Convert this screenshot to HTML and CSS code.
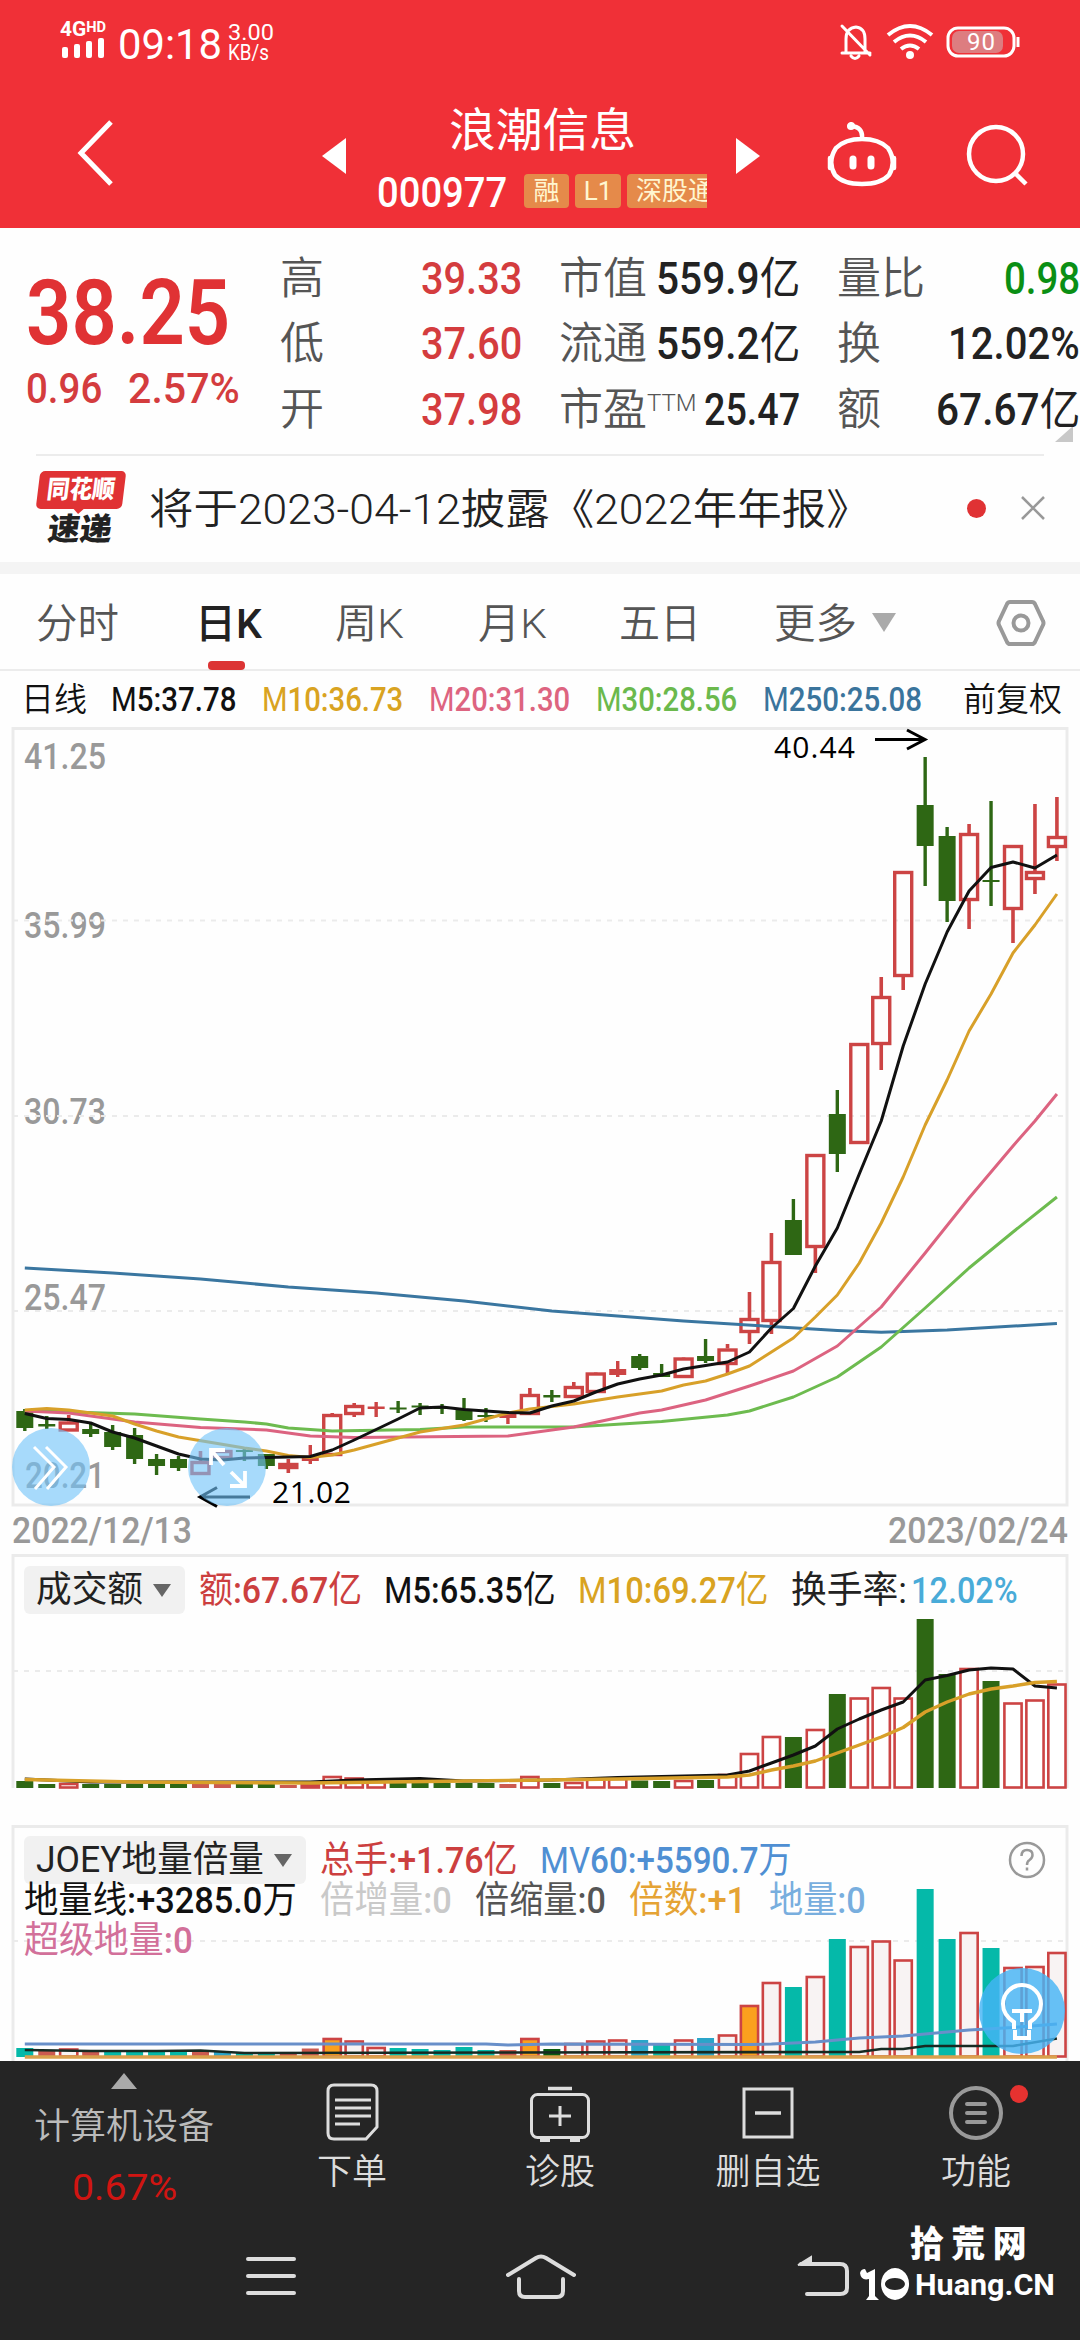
FILE: index.html
```html
<!DOCTYPE html>
<html lang="zh-CN">
<head>
<meta charset="utf-8">
<title>浪潮信息 000977</title>
<link rel="stylesheet" href="styles.css">
</head>
<body>
<header class="top">
  <div class="status">
    <div class="net"><b data-w="46">4G<sup>HD</sup></b>
      <svg width="46" height="22" viewBox="0 0 46 22" fill="#fff"><rect x="2" y="10" width="6" height="11" rx="2"/><rect x="14" y="7" width="6" height="14" rx="2"/><rect x="26" y="4" width="6" height="17" rx="2"/><rect x="38" y="1" width="6" height="20" rx="2"/></svg>
    </div>
    <span class="clock"><span data-w="104">09:18</span></span>
    <div class="speed"><span data-w="46">3.00</span><span data-w="41">KB/s</span></div>
    <svg class="sys" width="184" height="38" viewBox="0 0 184 38" fill="none" stroke="#fff" stroke-width="3">
      <path d="M3 30h28M7 30V16q0-11 10-12q9 1 9 12v14M12 33q4 5 8 0M3 3l28 29" stroke-linecap="round"/>
      <g stroke-width="4"><path d="M49 12q22-18 44 0M55 19q16-13 32 0M62 26q9-7 18 0"/></g><circle cx="71" cy="32" r="4" fill="#fff" stroke="none"/>
      <rect x="109" y="5" width="66" height="28" rx="10"/><rect x="113" y="8" width="51" height="22" rx="7" fill="#c9c9c9" fill-opacity=".5" stroke="none"/><path d="M179 14v10"/>
      <text x="128" y="27" textLength="28" fill="#fff" stroke="none" font-family="Roboto" font-size="24">90</text>
    </svg>
  </div>
  <div class="bar">
    <svg class="back" width="36" height="66" viewBox="0 0 36 66" fill="none" stroke="#fff" stroke-width="5"><path d="M34 2L4 33L34 64"/></svg>
    <svg class="prev" width="24" height="36" viewBox="0 0 24 36"><path d="M24 0v36L0 18z" fill="#fff"/></svg>
    <div class="title">
      <h1><span data-w="187">浪潮信息</span></h1>
      <div class="code"><span data-w="130">000977</span><i class="t1">融</i><i class="t2">L1</i><i class="t3">深股通</i></div>
    </div>
    <svg class="next" width="24" height="36" viewBox="0 0 24 36"><path d="M0 0v36L24 18z" fill="#fff"/></svg>
    <svg class="robot" width="70" height="66" viewBox="0 0 70 66" fill="none" stroke="#fff" stroke-width="4.5" stroke-linecap="round"><path d="M35 17Q18 17 9 26Q0 40 8 53Q16 62 35 62Q54 62 62 53Q70 40 61 26Q52 17 35 17zM35 16Q36 5 24 4"/><circle cx="24" cy="4" r="1.8"/><path d="M3 36v10M67 36v10"/><path d="M26 37v7M44 37v7" stroke-width="7"/></svg>
    <svg class="search" width="62" height="62" viewBox="0 0 62 62" fill="none" stroke="#fff" stroke-width="4.5"><circle cx="30" cy="30" r="27"/><path d="M49 49l11 11"/></svg>
  </div>
</header>

<section class="quote">
  <div class="price">
    <strong><span data-w="204">38.25</span></strong>
    <p><span data-w="76">0.96</span><span data-w="112">2.57%</span></p>
  </div>
  <dl class="stats">
    <dt>高</dt><dd class="r"><span data-w="101">39.33</span></dd><dt>市值</dt><dd><span data-w="144">559.9亿</span></dd><dt>量比</dt><dd class="g"><span data-w="76">0.98</span></dd>
    <dt>低</dt><dd class="r"><span data-w="101">37.60</span></dd><dt>流通</dt><dd><span data-w="144">559.2亿</span></dd><dt>换</dt><dd><span data-w="132">12.02%</span></dd>
    <dt>开</dt><dd class="r"><span data-w="101">37.98</span></dd><dt>市盈<sup>TTM</sup></dt><dd><span data-w="96">25.47</span></dd><dt>额</dt><dd><span data-w="144">67.67亿</span></dd>
  </dl>
  <svg class="more" width="18" height="16" viewBox="0 0 18 16"><path d="M18 0v16H0z" fill="#c8c8c8"/></svg>
</section>

<section class="news">
  <div class="logo"><b><span data-w="68">同花顺</span></b><em><span data-w="64">速递</span></em></div>
  <p><span data-w="722">将于2023-04-12披露《2022年年报》</span></p>
  <span class="dot"></span>
  <svg width="26" height="26" viewBox="0 0 26 26" stroke="#999" stroke-width="2.5"><path d="M2 2l22 22M24 2L2 24"/></svg>
</section>

<nav class="tabs">
  <span><b data-w="83">分时</b></span><span class="on"><b data-w="67">日K</b></span><span><b data-w="69">周K</b></span><span><b data-w="69">月K</b></span><span><b data-w="82">五日</b></span>
  <span><b data-w="83">更多</b><svg width="24" height="19" viewBox="0 0 24 19"><path d="M0 0h24L12 19z" fill="#aaa"/></svg></span>
  <svg class="hex" width="50" height="48" viewBox="0 0 50 48" fill="none" stroke="#999" stroke-width="4" stroke-linejoin="round"><path d="M14 3h22q2 0 3 2l8 17q1 2 0 4l-8 17q-1 2-3 2H14q-2 0-3-2L3 26q-1-2 0-4l8-17q1-2 3-2z"/><circle cx="25" cy="24" r="7.5"/></svg>
</nav>

<div class="ma">
  <span class="cn">日线</span><span><b data-w="125">M5:37.78</b></span><span class="o"><b data-w="141">M10:36.73</b></span><span class="p"><b data-w="141">M20:31.30</b></span><span class="gr"><b data-w="141">M30:28.56</b></span><span class="bl"><b data-w="159">M250:25.08</b></span><span class="cn">前复权</span>
</div>

<svg id="kline" class="kline" width="1080" height="827" viewBox="0 727 1080 827">
  <g class="axis">
    <text x="24" y="769" textLength="82" lengthAdjust="spacingAndGlyphs">41.25</text>
    <text x="24" y="938" textLength="82" lengthAdjust="spacingAndGlyphs">35.99</text>
    <text x="24" y="1124" textLength="82" lengthAdjust="spacingAndGlyphs">30.73</text>
    <text x="24" y="1310" textLength="82" lengthAdjust="spacingAndGlyphs">25.47</text>
    <text x="25" y="1488" textLength="80" lengthAdjust="spacingAndGlyphs">20.21</text>
    <text x="12" y="1543" textLength="180" lengthAdjust="spacingAndGlyphs">2022/12/13</text>
    <text x="888" y="1543" textLength="180" lengthAdjust="spacingAndGlyphs">2023/02/24</text>
  </g>
  <g class="frame"><path d="M13 728.5H1067V1505H13z"/><path class="dash" d="M13 920.5H1067M13 1116H1067M13 1311H1067"/></g>
  <g id="candles"></g>
  <g class="mark">
    <text x="774" y="758" textLength="81">40.44</text><path d="M875 739.5h48M907 730l18 9.500l-18 9.500"/>
    <text x="272" y="1502.500" textLength="79">21.02</text><path d="M250 1497h-48M217 1487.500l-17 9.500l17 9.500"/>
  </g>
  <g class="float">
    <circle cx="51" cy="1467" r="39"/><path d="M34 1447l20 20l-19 22M46 1447l20 20l-19 22" stroke-width="3"/>
    <circle cx="227" cy="1467" r="39"/><path d="M211 1465v-15h14M211 1450l13 15M230 1486h15v-15M245 1486l-14-14" stroke-width="3.800"/>
  </g>
</svg>

<section class="panel vol">
  <svg id="volume" width="1080" height="271" viewBox="0 1554 1080 271">
    <g class="frame"><path d="M13 1788V1555.500H1067V1788"/><path class="dash" d="M13 1671H1067"/></g>
  </svg>
  <div class="legend l1">
    <span class="pick"><b data-w="107">成交额</b><i></i></span><span class="r"><b data-w="163">额:67.67亿</b></span><span><b data-w="172">M5:65.35亿</b></span><span class="o"><b data-w="191">M10:69.27亿</b></span><span class="dk"><b data-w="116">换手率:</b></span><span class="sk"><b data-w="107">12.02%</b></span>
  </div>
</section>

<section class="panel joey">
  <svg id="joey" width="1080" height="236" viewBox="0 1825 1080 236">
    <g class="frame"><path d="M13 2061V1826.500H1067V2061"/><path class="dash" d="M13 1941H1067"/></g>
  </svg>
  <div class="rows">
    <div class="legend l2"><span class="pick"><b data-w="228">JOEY地量倍量</b><i></i></span><span class="r"><b data-w="198">总手:+1.76亿</b></span><span class="b2"><b data-w="252">MV60:+5590.7万</b></span>
      <svg class="help" width="38" height="38" viewBox="0 0 38 38" fill="none" stroke="#999" stroke-width="2.500"><circle cx="19" cy="19" r="17"/><path d="M13.500 15q0-6 5.500-6t5.500 5q0 3-3 5q-2.500 1.500-2.500 5M19 26.500v3"/></svg></div>
    <div class="legend l3"><span><b data-w="273">地量线:+3285.0万</b></span><span class="lt"><b data-w="132">倍增量:0</b></span><span class="gy"><b data-w="131">倍缩量:0</b></span><span class="or"><b data-w="117">倍数:+1</b></span><span class="b3"><b data-w="97">地量:0</b></span></div>
    <div class="legend l3"><span class="pk"><b data-w="169">超级地量:0</b></span></div>
  </div>
</section>

<footer class="foot">
  <div class="menu">
    <div class="idx"><svg width="26" height="16" viewBox="0 0 26 16"><path d="M13 0l13 16H0z" fill="#aaa"/></svg><span>计算机设备</span><b><span data-w="105">0.67%</span></b></div>
    <div><svg width="60" height="60" viewBox="0 0 60 60" fill="none" stroke="#ddd" stroke-width="3"><path d="M12 3H49Q55 3 55 9V45L44 57H12Q6 57 6 51V9Q6 3 12 3z"/><path d="M13 18H49M13 26H49M13 34H49M13 42H38"/></svg>下单</div>
    <div><svg width="60" height="60" viewBox="0 0 60 60" fill="none" stroke="#ddd" stroke-width="3"><path d="M18 6.500H42" stroke-width="3.500"/><rect x="1.500" y="12.500" width="57" height="43" rx="6"/><path d="M19 34H41M30 24V44M10 58.500h10M40 58.500h10"/></svg>诊股</div>
    <div><svg width="60" height="60" viewBox="0 0 60 60" fill="none" stroke="#ddd" stroke-width="3"><rect x="6" y="7" width="48" height="48"/><path d="M17 31H43" stroke-width="3.500"/></svg>删自选</div>
    <div class="fn"><svg width="60" height="60" viewBox="0 0 60 60" fill="none" stroke="#999" stroke-width="4"><circle cx="30" cy="31" r="25"/><path d="M21 22H39M21 31H39M21 40H39" stroke-linecap="round"/></svg><i></i>功能</div>
  </div>
  <div class="keys">
    <svg width="50" height="42" viewBox="0 0 50 42" stroke="#ddd" stroke-width="4" stroke-linecap="round"><path d="M2 3H48M2 20H48M2 37H48"/></svg>
    <svg width="70" height="46" viewBox="0 0 70 46" fill="none" stroke="#ddd" stroke-width="4" stroke-linecap="round"><path d="M2 21L30 4Q35 1 40 4L68 21M13 25V37Q13 43 19 43H51Q57 43 57 37V25"/></svg>
    <svg width="54" height="46" viewBox="0 0 54 46" fill="none" stroke="#ddd" stroke-width="4" stroke-linecap="round"><path d="M4 10H43Q50 10 50 17V34Q50 40 43 40H10"/><path d="M1 11L14 3V9z" fill="#ddd" stroke-width="2"/></svg>
  </div>
  <div class="mark-site"><b><span data-w="124">拾荒网</span></b>
    <p><svg width="52" height="34" viewBox="0 0 52 34" fill="#fff"><path d="M0 5Q1 1 5 1l2 4l8-4v27l4 4H6l3-4V11Q1 13 0 5z"/><path fill-rule="evenodd" d="M35 0a14 16 0 1 0 .1 0zM35 10a10 6 0 1 1-.1 0z"/></svg><span data-w="140">Huang.CN</span></p>
  </div>
</footer>
<div class="bulb"><svg width="88" height="88" viewBox="0 0 88 88" fill="none" stroke="#fff" stroke-width="4"><circle cx="44" cy="44" r="43" fill="#46b4f5" fill-opacity=".82" stroke="none"/><path d="M36 62V55Q25 48 25 37A19 19 0 0 1 63 37Q63 48 52 55V62M34 44H54M44 44V55M37 63V71H51V63"/></svg></div>
<script src="chart.js"></script>
</body>
</html>
```
FILE: styles.css
```css
* { box-sizing: border-box; margin: 0; padding: 0; }
body { width: 1080px; height: 2340px; overflow: hidden; position: relative; background: #fefefe; color: #222; font-family: Roboto, "Noto Sans CJK SC", sans-serif; }
svg { display: block; flex: none; }
i, em { font-style: normal; }
.fit { display: inline-block; white-space: nowrap; vertical-align: baseline; }
.fit > span { display: inline-block; transform-origin: 0 50%; white-space: nowrap; }
.thin { font-weight: 400; }

.top { height: 228px; background: #f03037; color: #fff; }
.status { height: 84px; padding: 22px 82px 0 60px; display: flex; align-items: flex-start; }
.net { width: 58px; }
.net b { font-size: 20px; line-height: 14px; font-weight: 700; height: 14px; display: block; }
.net sup { font-size: 14px; line-height: 0; vertical-align: 4px; }
.net svg { margin-top: 1px; }
.clock { width: 110px; font-size: 43px; line-height: 44px; }
.speed { display: flex; flex-direction: column; font-size: 22px; line-height: 20px; padding-top: 1px; }
.sys { margin-left: auto; margin-right: -25px; margin-top: 1px; }

.bar { height: 144px; display: flex; align-items: flex-start; }
.back { margin: 36px 0 0 77px; }
.prev { margin: 54px 0 0 209px; }
.title { width: 330px; margin: 14px 0 0 31px; display: flex; flex-direction: column; align-items: center; }
.title h1 { font-size: 46px; font-weight: 400; line-height: 64px; }
.code { width: 330px; height: 36px; margin-top: 12px; display: flex; overflow: hidden; font-size: 42px; line-height: 37px; font-weight: 500; }
.code i { height: 34px; line-height: 34px; background: #e58a4a; border-radius: 4px; font-size: 26px; font-weight: 400; text-align: center; flex: none; color: #fff6d0; }
.t1 { width: 45px; margin-left: 17px; }
.t2 { width: 46px; margin-left: 6px; }
.t3 { width: 96px; margin-left: 6px; }
.next { margin: 54px 0 0 29px; }
.robot { margin: 38px 0 0 67px; }
.search { margin: 40px 0 0 69px; }

.quote { height: 226px; display: flex; padding-top: 18px; }
.price { width: 280px; padding: 31px 0 0 26px; color: #e03234; }
.price strong { font-size: 90px; font-weight: 600; line-height: 74px; height: 74px; display: block; }
.price p { display: flex; gap: 26px; font-size: 43px; font-weight: 500; line-height: 50px; margin-top: 12px; color: #d43c3e; }
.stats { display: grid; grid-template-columns: 100px 142px 37px 90px 151px 37px 90px 153px; grid-template-rows: repeat(3, 65.500px); align-items: center; width: 800px; }
.stats dt { font-size: 44px; font-weight: 350; color: #555; white-space: nowrap; line-height: 64px; }
.stats dt:nth-of-type(3n+1) { grid-column: 1; }
.stats dt:nth-of-type(3n+2) { grid-column: 4; }
.stats dt:nth-of-type(3n) { grid-column: 7; }
.stats dd { font-size: 44px; font-weight: 500; text-align: right; line-height: 64px; }
.stats dt sup { font-size: 24px; font-weight: 300; line-height: 0; vertical-align: 14px; }
.stats .r { color: #d43c3e; }
.stats .g { color: #0a8f14; }
.more { margin: 180px 0 0 -25px; }

.news { height: 108px; display: flex; align-items: center; padding: 0 36px 0 36px; background: linear-gradient(#ececec, #ececec) 36px 0 / 1008px 2px no-repeat; }
.logo { width: 113px; height: 80px; margin-top: 6px; }
.logo b { display: block; width: 86px; height: 38px; background: #e03234; border-radius: 5px; transform: skewX(-7deg); margin-left: 2px; color: #fff; font-size: 25px; line-height: 38px; font-weight: 900; text-align: center; }
.logo b::after { content: ""; display: block; margin: -3px auto 0; width: 0; border: 8px solid transparent; border-top-color: #e03234; border-bottom: 0; }
.logo em { display: block; font-size: 31px; line-height: 32px; font-weight: 900; transform: skewX(-7deg); margin: 5px 0 0 12px; }
.news p { font-size: 42px; font-weight: 350; width: 808px; line-height: 60px; padding-top: 4px; color: #222; }
.dot { width: 19px; height: 19px; border-radius: 50%; background: #e03234; margin-left: 10px; flex: none; }
.news > svg { margin-left: 34px; margin-right: -2px; }

.tabs { height: 109px; border-top: 12px solid #f4f4f4; border-bottom: 2px solid #ececec; display: grid; grid-template-columns: 159px 140px 143px 141px 155px 222px 60px; padding-left: 36px; font-size: 41px; font-weight: 350; line-height: 60px; color: #555; padding-top: 20px; }
.tabs b { font-weight: inherit; }
.tabs span { white-space: nowrap; }
.tabs > span { position: relative; }
.tabs .on { font-weight: 500; color: #222; }
.tabs .on::after { content: ""; position: absolute; left: 13px; top: 67px; width: 37px; height: 9px; border-radius: 4px; background: #dc3434; }
.tabs span svg { display: inline-block; margin-left: 15px; vertical-align: 6px; }
.hex { margin-top: 5px; }

.ma { height: 56px; display: grid; grid-template-columns: 90px 151px 167px 167px 167px 200px 110px; padding-left: 21px; font-size: 33px; font-weight: 500; line-height: 58px; color: #111; white-space: nowrap; }
.ma b, .legend b { font-weight: inherit; }
.ma .cn { font-size: 33px; font-weight: 350; }
.o { color: #d9a321; }
.p { color: #dd6480; }
.gr { color: #6bb94c; }
.bl { color: #3a749c; }

.axis { font-size: 37px; font-weight: 500; fill: #999; }
.frame path { fill: none; stroke: #ebebeb; stroke-width: 3; }
.frame .dash { stroke-width: 2; stroke-dasharray: 5 6; }
.mark text { font: 400 30px "Open Sans", sans-serif; fill: #000; }
.mark path { fill: none; stroke: #000; stroke-width: 3; }
.float circle { fill: #71c3f8; fill-opacity: .62; }
.float path { stroke: #fff; fill: none; }

.panel { display: grid; }
.panel > * { grid-area: 1 / 1; }
.vol { height: 271px; }
.joey { height: 236px; }
.legend { display: flex; height: 48px; line-height: 50px; font-size: 37px; font-weight: 500; white-space: nowrap; padding-left: 24px; color: #111; }
.vol .legend { margin-top: 12px; }
.legend > span + span { margin-left: 22px; }
.pick { background: #f1f1f1; border-radius: 6px; display: flex; align-items: center; padding-left: 12px; font-weight: 400; font-size: 36px; color: #222; }
.pick i { border: 9px solid transparent; border-top: 13px solid #666; border-bottom: 0; margin: 0 14px 0 10px; }
.legend > .pick + span { margin-left: 14px; }
.dk { font-weight: 400; color: #222; }
.legend > .dk + .sk { margin-left: 4px; }
.legend .r { color: #cc3f3f; }
.sk { color: #49abd8; }
.rows { padding-top: 11px; }
.legend.l3 { height: 40px; line-height: 40px; margin-top: -3px; }
.legend.l3 + .l3 { margin-top: 0; }
.l3 > span + span { margin-left: 23px; }
.b2 { color: #4f8fd3; }
.lt { color: #c9c9c9; }
.gy { color: #555; }
.or { color: #e5a334; }
.b3 { color: #78aede; }
.pk { color: #d2709a; }
.help { margin: 5px 0 0 216px; }
.bulb { position: absolute; left: 978px; top: 1967px; }

.foot { height: 279px; background: #252525; color: #ccc; position: relative; }
.menu { display: grid; grid-template-columns: 248px repeat(4, 208px); height: 160px; font-size: 35px; font-weight: 350; line-height: 52px; color: #ddd; }
.menu > div { display: flex; flex-direction: column; align-items: center; padding-top: 21px; position: relative; }
.menu > div > svg { margin-bottom: 5px; }
.menu .idx { padding-top: 12px; font-size: 36px; color: #bbb; }
.menu .idx > svg { margin-bottom: 12px; }
.idx b { color: #d01512; font-weight: 400; font-size: 37px; margin-top: 9px; }
.fn i { position: absolute; left: 138px; top: 24px; width: 18px; height: 18px; border-radius: 50%; background: #e63230; }
.keys { display: flex; align-items: center; height: 72px; margin-top: 20px; padding-left: 246px; }
.keys svg + svg { margin-left: 210px; }
.keys svg + svg + svg { margin-left: 221px; }
.mark-site { position: absolute; left: 860px; top: 156px; color: #fff; }
.mark-site b { font: 900 36px/48px "Noto Sans CJK SC", sans-serif; display: block; margin-left: 50px; letter-spacing: 8px; }
.mark-site p { display: flex; gap: 3px; align-items: center; font-size: 29px; font-weight: 700; line-height: 36px; margin-top: 2px; }
```
FILE: chart.js
```js
// Chinese characters and the leading "M" of the average labels are set lighter than the digits.
function lightenRuns() {
  document.querySelectorAll('.stats dd [data-w], .ma [data-w], .legend [data-w]').forEach(function (el) {
    el.innerHTML = el.textContent.replace(/[\u4e00-\u9fff]+|^MV?/g, function (m) {
      return '<span class="thin">' + m + '</span>';
    });
  });
}

// Fit each label to its designed width.
function fitLabels() {
  document.querySelectorAll('[data-w]').forEach(function (el) {
    var w = +el.dataset.w;
    var inner = document.createElement('span');
    while (el.firstChild) inner.appendChild(el.firstChild);
    el.appendChild(inner);
    el.classList.add('fit');
    var natural = inner.offsetWidth;
    el.style.width = w + 'px';
    inner.style.transform = 'scaleX(' + w / natural + ')';
    el.style.textAlign = 'left';
  });
}

var NS = 'http://www.w3.org/2000/svg';
var RED = '#cc4444', GREEN = '#2e6714';
function X(i) { return 24.8 + 21.96 * i; }
function add(parent, tag, attrs) {
  var n = document.createElementNS(NS, tag);
  for (var k in attrs) n.setAttribute(k, attrs[k]);
  parent.appendChild(n);
}
function line(parent, pts, color, w) {
  add(parent, 'polyline', { points: pts.map(function (p) { return X(p[0]) + ',' + p[1]; }).join(' '), fill: 'none', stroke: color, 'stroke-width': w || 3, 'stroke-linejoin': 'round' });
}

// [kind, body top, body bottom, wick top, wick bottom]; kinds: g green, r hollow red, f solid red
var candles = [
  ['g',1411,1428,1409,1431],['g',1424,1426.5,1416,1429],['r',1421.5,1431.5,1415,1431],['g',1429,1434,1423,1437],
  ['g',1432,1447,1425,1450],['g',1435,1459,1428,1464],['g',1459,1466,1454,1475],['g',1459,1468,1456,1471],
  ['r',1461,1475,1451,1474],['r',1450,1459,1449,1458],['g',1450,1452,1449,1461],['g',1454,1466,1454,1469],
  ['r',1463,1469,1459,1473],['f',1457,1461,1445,1464],['r',1414,1456,1413,1455],['r',1405,1415,1403,1417],
  ['f',1406.5,1409,1402,1417],['g',1407.5,1409.5,1401,1413],['g',1405.5,1407.5,1403,1415],['g',1407,1409,1404,1414],
  ['g',1410,1420,1398,1421],['g',1415,1417,1408,1422],['f',1414,1418,1414,1424],['r',1394,1415,1388,1414],
  ['g',1395,1397.5,1390,1402],['r',1386,1398,1382,1397],['r',1372.5,1393,1373,1392],['f',1369,1375,1361,1377],
  ['g',1356,1368,1354,1370],['g',1373,1377,1364,1377],['r',1357.5,1378,1358,1377],['g',1356,1361,1339,1363],
  ['r',1348.5,1365,1344,1374],['r',1318,1333,1292,1344],['r',1261,1322,1233,1334],['g',1220,1255,1199,1255],
  ['r',1154,1248,1155,1273],['g',1114,1154,1090,1172],['r',1043,1144,1044,1143],['r',996,1045,977,1070],
  ['r',871,977,872,990],['g',805,846,757,886],['g',836,901,827,922],['r',833,901,824,929],
  ['g',880,882,801,906],['r',845,910,846,943],['r',871,880,804,894],['r',836,848,797,861]
];
var g = document.getElementById('candles');
candles.forEach(function (c, i) {
  var x = X(i), col = c[0] === 'g' ? GREEN : RED;
  if (c[0] === 'r') {
    add(g, 'path', { d: 'M' + x + ' ' + c[3] + 'V' + c[1] + 'M' + x + ' ' + c[2] + 'V' + Math.max(c[2], c[4]), stroke: col, 'stroke-width': 3.6 });
    add(g, 'rect', { x: x - 8.5, y: c[1] + 1.5, width: 17, height: c[2] - c[1] - 3, fill: 'none', stroke: col, 'stroke-width': 3.4 });
  } else {
    add(g, 'path', { d: 'M' + x + ' ' + c[3] + 'V' + c[4], stroke: col, 'stroke-width': 3.4 });
    add(g, 'rect', { x: x - 8.5, y: c[1], width: 17, height: c[2] - c[1], fill: col });
  }
});
line(g, [[0,1268],[4,1273],[8,1279],[12,1287],[16,1293],[20,1301],[24,1311],[30,1321],[34,1326.5],[37,1330.5],[39,1332.2],[42,1330],[47,1323.6]], '#3a76a0');
line(g, [[0,1410.5],[5,1414],[8,1419],[10,1422],[11,1424],[12,1428],[14,1431],[18,1429.5],[20,1427],[25,1427],[29,1421.5],[32,1415],[33,1411],[35,1397],[37,1377],[39,1347],[41,1308],[43,1268],[45,1232],[47,1197]], '#6dbb4f');
line(g, [[0,1411],[2,1413],[5,1422],[8,1427.5],[11,1430],[13,1436],[15,1437.5],[22,1436],[23,1433],[25,1427],[28,1413],[29,1410],[31,1400],[33,1386],[35,1371],[37,1346],[39,1307],[41,1253],[43,1198],[45,1146],[46,1121],[47,1094]], '#dc6380');
line(g, [[0,1410],[1,1408.5],[2,1410],[4,1416],[5,1424],[6,1431],[7,1437],[10,1448],[11,1451],[12,1455.5],[13,1457.5],[14,1455],[15,1450],[17,1438],[18,1432],[20,1425],[22,1413],[23,1409],[25,1404],[27,1397],[29,1391],[30,1385],[31,1381],[32,1374],[33,1366],[34,1352],[35,1338],[36,1317],[37,1295],[38,1263],[39,1223],[40,1177],[41,1125],[42,1080],[43,1031],[44,994],[45,953],[46,925],[47,894]], '#d8a029');
line(g, [[0,1413.5],[1,1418.5],[2,1419.5],[3,1423],[4,1432],[5,1438],[6,1446],[7,1454],[8,1459],[9,1460],[10,1458],[12,1457],[13,1456.5],[14,1450],[15,1440],[17,1419],[18,1408],[19,1407],[20,1409.5],[21,1411],[22,1412.5],[23,1413],[24,1406],[25,1401],[26,1392],[27,1384],[28,1379],[29,1375],[30,1369],[31,1365.5],[32,1362],[33,1352],[34,1328],[35,1308.5],[36,1266],[37,1228],[38,1174],[39,1121],[40,1046],[41,984],[42,932],[43,891],[44,867.5],[45,862],[46,868],[47,855]], '#111');

function bars(parent, data, base) {
  data.forEach(function (b, i) {
    var x = X(i), hollow = b[0] === 'r', o = b[0] === 'o';
    var fill = { g: GREEN, f: '#cc5a50', t: '#05b9a9', o: '#fba01e', d: '#0b5c10', c: '#2aa5c9', r: base > 2000 ? '#f8f3f3' : '#fff' }[b[0]];
    add(parent, 'rect', hollow || o
      ? { x: x - 8.6, y: b[1] + 1, width: 17.2, height: base - b[1] - 1.5, fill: fill, stroke: '#cc4444', 'stroke-width': 2.6 }
      : { x: x - 8.5, y: b[1], width: 17, height: base - b[1], fill: fill });
  });
}
var vol = document.getElementById('volume');
bars(vol, [['g',1781],['g',1784],['r',1783],['g',1784],['g',1784],['g',1784],['g',1784],['g',1784],['f',1784],['f',1784],['g',1784],['g',1784],['f',1785],['r',1784],['r',1776],['r',1777.5],['r',1781],['g',1783],['g',1783],['g',1783],['g',1783],['g',1783],['f',1784],['r',1776],['g',1783],['r',1782],['r',1778],['r',1778],['g',1780.5],['g',1781],['r',1780],['g',1780],['r',1774],['r',1753],['r',1736],['g',1737],['r',1729],['g',1694],['r',1697.5],['r',1687],['r',1697.5],['g',1619],['g',1674],['r',1668],['g',1681],['r',1702.5],['r',1699.5],['r',1683.5]], 1788);
line(vol, [[0,1779],[1,1780],[3,1782],[13,1782],[15,1780],[18,1778.5],[20,1781],[24,1780],[27,1777.5],[32,1775],[33,1771],[34,1763],[35,1755],[36,1746],[37,1729],[38,1719],[39,1710],[40,1702],[41,1680],[42,1675.5],[43,1670],[44,1668],[45,1669],[46,1686],[47,1688]], '#111');
line(vol, [[0,1779.5],[5,1782],[13,1783],[20,1781],[27,1779],[32,1777],[33,1775],[34,1770],[35,1766],[36,1761],[37,1753],[38,1745],[39,1737],[40,1727.5],[41,1712],[42,1702],[43,1694],[44,1689],[45,1686],[46,1682.5],[47,1681.5]], '#d8a029', 3.4);

var joey = document.getElementById('joey');
bars(joey, [['t',2048],['f',2051],['r',2048.5],['f',2052],['t',2051],['t',2051],['t',2052],['t',2052],['f',2051],['c',2052],['t',2053],['t',2053],['f',2052],['f',2048.5],['o',2038],['r',2040.5],['r',2047],['t',2048],['t',2049],['t',2050],['t',2047],['t',2050],['f',2050],['o',2038],['d',2049],['r',2043],['r',2040.5],['r',2039.5],['c',2040],['t',2045],['r',2039.5],['c',2038],['r',2034.5],['o',2005],['r',1982],['t',1987],['r',1976],['t',1939],['r',1946],['r',1940.5],['r',1959.5],['t',1889],['t',1939],['r',1932],['t',1948],['r',1967],['r',1966],['r',1952]], 2057);
line(joey, [[0,2044],[21,2044],[22,2045],[24,2044],[33,2044.5],[34,2044],[36,2042],[38,2038],[40,2036],[43,2030],[45,2027.5],[47,2024]], '#688fc9', 3);
line(joey, [[0,2050],[3,2051],[6,2051],[8,2050.5],[10,2053],[38,2052],[39,2049],[40,2049],[41,2046],[45,2046],[47,2038.5]], '#172a22', 2.6);
line(joey, [[0,2057],[47,2057]], '#daa04d', 3.5);
lightenRuns();
fitLabels();
```
